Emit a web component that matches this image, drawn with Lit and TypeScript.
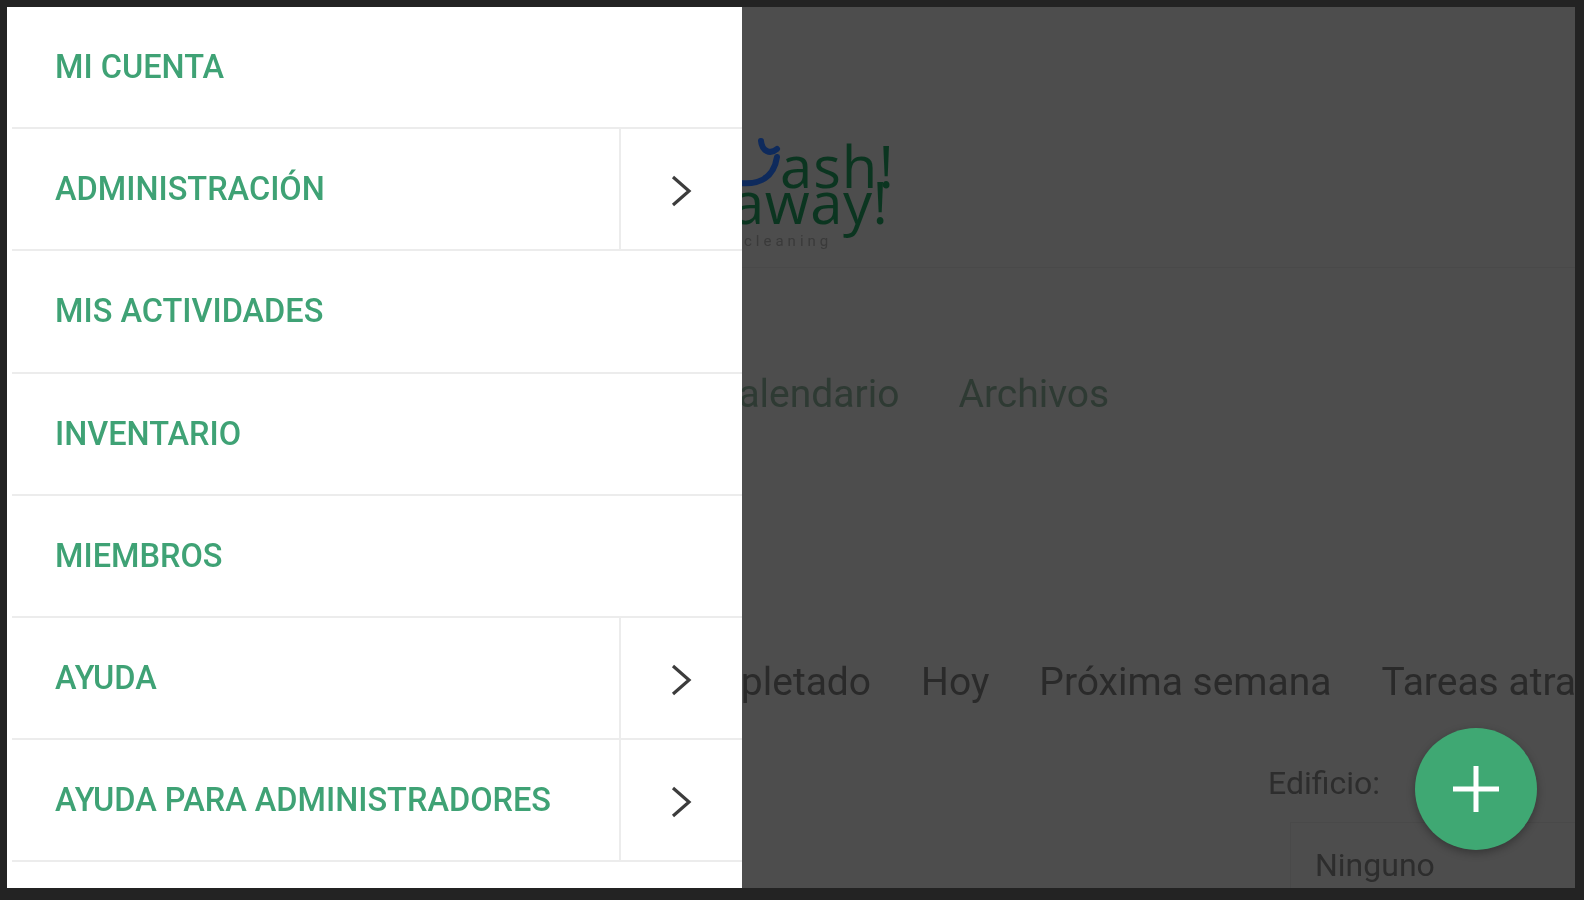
import { LitElement, html, css } from "lit";
import { customElement } from "lit/decorators.js";

const items = [
  { label: "MI CUENTA", more: false },
  { label: "ADMINISTRACIÓN", more: true },
  { label: "MIS ACTIVIDADES", more: false },
  { label: "INVENTARIO", more: false },
  { label: "MIEMBROS", more: false },
  { label: "AYUDA", more: true },
  { label: "AYUDA PARA ADMINISTRADORES", more: true },
];

@customElement("app-root")
export class AppRoot extends LitElement {
  static styles = css`
    :host { display: block; }
    * { box-sizing: border-box; }
    .frame {
      height: 900px;
      padding: 7px 9px 12px 7px;
      background: #232323;
      font-family: Roboto, "Liberation Sans", sans-serif;
      filter: blur(0.6px);
      overflow: hidden;
    }
    .screen {
      position: relative;
      height: 100%;
      overflow: hidden;
      background: #4d4d4d;
      color: #2b2b2b;
      white-space: nowrap;
    }
    .page { display: flex; flex-direction: column; height: 100%; }
    .brand {
      height: 261px;
      flex: none;
      padding: 122px 0 0 729px;
      border-bottom: 1px solid #494949;
      display: flex;
    }
    .logo { position: relative; width: 170px; height: 120px; }
    .logo svg { position: absolute; left: 0; top: 4px; }
    .logo-a, .logo-b {
      position: absolute;
      font-family: "Open Sans", sans-serif;
      font-size: 58px;
      line-height: 36px;
      color: #0b3520;
    }
    .logo-a { left: 44px; top: 19px; letter-spacing: 1px; }
    .logo-b { left: -4px; top: 55px; letter-spacing: 0.5px; }
    .logo-c {
      position: absolute;
      left: 8px;
      top: 104px;
      font-size: 15px;
      line-height: 16px;
      color: #3a3a3a;
      letter-spacing: 4px;
    }
    .nav {
      display: flex;
      gap: 59px;
      padding: 0 0 0 706px;
      margin-top: 105px;
      font-size: 39px;
      line-height: 42px;
      color: #2e3a33;
    }
    .filters {
      display: flex;
      gap: 50px;
      padding: 0 0 0 652px;
      margin-top: 246px;
      font-size: 39px;
      line-height: 42px;
      color: #2a2a2a;
    }
    .building {
      display: flex;
      flex-direction: column;
      align-items: flex-start;
      padding-left: 1261px;
      margin-top: 61px;
      font-size: 32px;
      line-height: 38px;
      color: #2d2d2d;
    }
    .select {
      margin: 20px 0 0 22px;
      padding: 23px 24px 0;
      height: 70px;
      width: 320px;
      border-left: 1px solid #494949;
      border-top: 1px solid #494949;
    }
    .drawer {
      position: absolute;
      left: 0;
      top: 0;
      bottom: 0;
      width: 735px;
      background: #fff;
    }
    .row {
      display: flex;
      height: 122.2px;
      margin-left: 5px;
      border-bottom: 2px solid #ececec;
    }
    .label {
      flex: 1;
      display: flex;
      align-items: center;
      padding-left: 43px;
      font-size: 32.5px;
      font-weight: 500;
      color: #3fa275;
    }
    .more {
      width: 123px;
      flex: none;
      display: flex;
      align-items: center;
      justify-content: center;
      padding: 4px 2px 0 0;
      border-left: 2px solid #ececec;
    }
    .fab {
      position: absolute;
      left: 1408px;
      top: 721px;
      width: 122px;
      height: 122px;
      border-radius: 50%;
      background: #3fa873;
      display: flex;
      align-items: center;
      justify-content: center;
      box-shadow: 0 3px 8px rgba(0, 0, 0, 0.3);
    }
  `;

  render() {
    return html`
      <div class="frame">
        <div class="screen">
          <div class="page">
            <div class="brand">
              <div class="logo">
                <svg width="50" height="70" viewBox="0 0 50 70" fill="none">
                  <path d="M25 8 C26 18 34 22 41 16 M41 24 C38 44 24 52 4 50" stroke="#0e2a5c" stroke-width="6" stroke-linecap="round"/>
                </svg>
                <div class="logo-a">ash!</div>
                <div class="logo-b">away!</div>
                <div class="logo-c">cleaning</div>
              </div>
            </div>
            <div class="nav"><span>Calendario</span><span>Archivos</span></div>
            <div class="filters">
              <span>Completado</span><span>Hoy</span><span>Próxima semana</span><span>Tareas atrasadas</span>
            </div>
            <div class="building">
              <span>Edificio:</span>
              <div class="select">Ninguno</div>
            </div>
          </div>
          <nav class="drawer">
            ${items.map(
              (i) => html`
                <div class="row">
                  <div class="label">${i.label}</div>
                  ${i.more
                    ? html`<div class="more">
                        <svg width="24" height="36" viewBox="0 0 24 36" fill="none">
                          <path d="M4 4 L20 18 L4 32" stroke="#3c3c3c" stroke-width="3.2"/>
                        </svg>
                      </div>`
                    : ""}
                </div>
              `
            )}
          </nav>
          <div class="fab">
            <svg width="46" height="46" viewBox="0 0 46 46">
              <path d="M23 0 V46 M0 23 H46" stroke="#fff" stroke-width="5"/>
            </svg>
          </div>
        </div>
      </div>
    `;
  }
}
